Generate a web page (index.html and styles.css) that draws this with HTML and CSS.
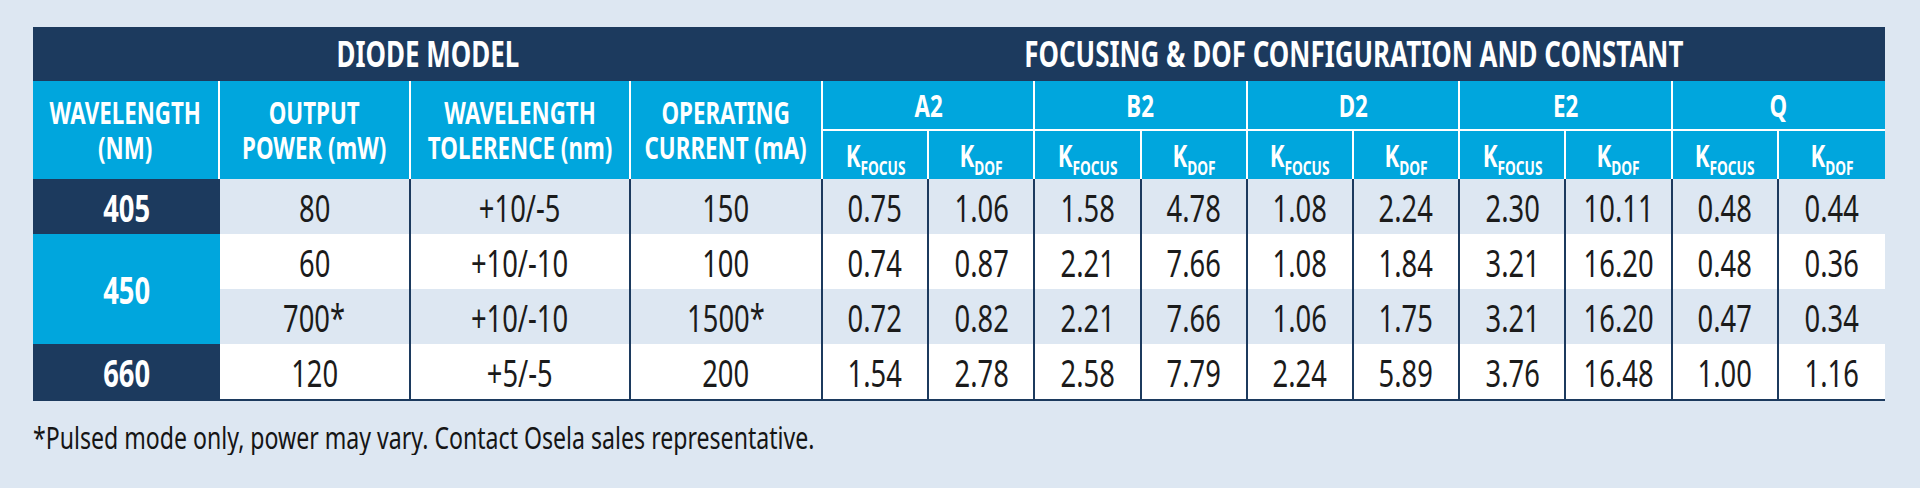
FILE: index.html
```html
<!DOCTYPE html>
<html lang="en">
<head>
<meta charset="utf-8">
<title>Diode model focusing and DOF constants</title>
<link rel="stylesheet" href="styles.css">
</head>
<body>
<div class="sheet">
  <table class="spec">
    <colgroup>
      <col class="c-wl"><col class="c-pw"><col class="c-tol"><col class="c-cur">
      <col><col><col><col><col><col><col><col><col><col>
    </colgroup>
    <thead>
      <tr class="band">
        <th colspan="4"><span class="t">DIODE MODEL</span></th>
        <th colspan="10"><span class="t">FOCUSING &amp; DOF CONFIGURATION AND CONSTANT</span></th>
      </tr>
      <tr class="grp">
        <th rowspan="2"><span class="t">WAVELENGTH<br>(NM)</span></th>
        <th rowspan="2"><span class="t">OUTPUT<br>POWER (mW)</span></th>
        <th rowspan="2"><span class="t">WAVELENGTH<br>TOLERENCE (nm)</span></th>
        <th rowspan="2"><span class="t">OPERATING<br>CURRENT (mA)</span></th>
        <th colspan="2" class="cfg"><span class="t">A2</span></th>
        <th colspan="2" class="cfg"><span class="t">B2</span></th>
        <th colspan="2" class="cfg"><span class="t">D2</span></th>
        <th colspan="2" class="cfg"><span class="t">E2</span></th>
        <th colspan="2" class="cfg"><span class="t">Q</span></th>
      </tr>
      <tr class="sub">
        <th><span class="t">K<sub>FOCUS</sub></span></th><th><span class="t">K<sub>DOF</sub></span></th>
        <th><span class="t">K<sub>FOCUS</sub></span></th><th><span class="t">K<sub>DOF</sub></span></th>
        <th><span class="t">K<sub>FOCUS</sub></span></th><th><span class="t">K<sub>DOF</sub></span></th>
        <th><span class="t">K<sub>FOCUS</sub></span></th><th><span class="t">K<sub>DOF</sub></span></th>
        <th><span class="t">K<sub>FOCUS</sub></span></th><th><span class="t">K<sub>DOF</sub></span></th>
      </tr>
    </thead>
    <tbody>
      <tr class="alt">
        <th class="wl dark"><span class="t">405</span></th>
        <td><span class="t">80</span></td><td><span class="t">+10/-5</span></td><td><span class="t">150</span></td>
        <td><span class="t">0.75</span></td><td><span class="t">1.06</span></td><td><span class="t">1.58</span></td><td><span class="t">4.78</span></td><td><span class="t">1.08</span></td><td><span class="t">2.24</span></td><td><span class="t">2.30</span></td><td><span class="t">10.11</span></td><td><span class="t">0.48</span></td><td><span class="t">0.44</span></td>
      </tr>
      <tr>
        <th class="wl blue" rowspan="2"><span class="t">450</span></th>
        <td><span class="t">60</span></td><td><span class="t">+10/-10</span></td><td><span class="t">100</span></td>
        <td><span class="t">0.74</span></td><td><span class="t">0.87</span></td><td><span class="t">2.21</span></td><td><span class="t">7.66</span></td><td><span class="t">1.08</span></td><td><span class="t">1.84</span></td><td><span class="t">3.21</span></td><td><span class="t">16.20</span></td><td><span class="t">0.48</span></td><td><span class="t">0.36</span></td>
      </tr>
      <tr class="alt">
        <td><span class="t">700*</span></td><td><span class="t">+10/-10</span></td><td><span class="t">1500*</span></td>
        <td><span class="t">0.72</span></td><td><span class="t">0.82</span></td><td><span class="t">2.21</span></td><td><span class="t">7.66</span></td><td><span class="t">1.06</span></td><td><span class="t">1.75</span></td><td><span class="t">3.21</span></td><td><span class="t">16.20</span></td><td><span class="t">0.47</span></td><td><span class="t">0.34</span></td>
      </tr>
      <tr class="last">
        <th class="wl dark"><span class="t">660</span></th>
        <td><span class="t">120</span></td><td><span class="t">+5/-5</span></td><td><span class="t">200</span></td>
        <td><span class="t">1.54</span></td><td><span class="t">2.78</span></td><td><span class="t">2.58</span></td><td><span class="t">7.79</span></td><td><span class="t">2.24</span></td><td><span class="t">5.89</span></td><td><span class="t">3.76</span></td><td><span class="t">16.48</span></td><td><span class="t">1.00</span></td><td><span class="t">1.16</span></td>
      </tr>
    </tbody>
  </table>
  <p class="note"><span class="nt">*Pulsed mode only, power may vary. Contact Osela sales representative.</span></p>
</div>
</body>
</html>
```

FILE: styles.css
```css
html, body {
  margin: 0;
  background: #dde7f2;
}

body {
  font-family: "Noto Sans", "Liberation Sans", sans-serif;
  color: #1b1b1b;
}

.sheet {
  padding: 27px 35px 0 33px;
}

.spec {
  width: 1852px;
  table-layout: fixed;
  border-collapse: separate;
  border-spacing: 0;
}

.c-wl { width: 187px; }
.c-pw { width: 191px; }
.c-tol { width: 220px; }
.c-cur { width: 192px; }

.spec th,
.spec td {
  padding: 0;
  text-align: center;
  vertical-align: middle;
  white-space: nowrap;
}

/* condensed lettering: text is narrowed horizontally, negative margins keep it centred */
.t {
  display: inline-block;
  transform: scaleX(0.72);
  margin: 0 -80px;
}

.band th {
  height: 54px;
  background: #1c3a5e;
  color: #fff;
  font-size: 36px;
  font-weight: 700;
  line-height: 1;
}

.grp th,
.sub th {
  background: #00a6dd;
  color: #fff;
  font-weight: 700;
  font-size: 31px;
  line-height: 35px;
  border-right: 2px solid #fff;
}

.grp th:last-child,
.sub th:last-child {
  border-right: 0;
}

.grp .cfg {
  height: 48px;
  border-bottom: 2px solid #fff;
}

.sub th {
  height: 48px;
}

.sub sub {
  font-size: 19px;
  line-height: 0;
  vertical-align: -8px;
}

.spec tbody td,
.spec tbody th {
  height: 55px;
  font-size: 38px;
  line-height: 1;
}

.spec tbody td {
  background: #fff;
  font-weight: 400;
  border-right: 2px solid #1c3a5e;
}

.spec tbody td:last-child {
  border-right: 0;
}

.spec tbody tr.alt td {
  background: #dde7f2;
}

.spec tbody tr.last td,
.spec tbody tr.last th {
  border-bottom: 2px solid #1c3a5e;
}

.wl {
  color: #fff;
  font-weight: 700;
}

.wl.dark { background: #1c3a5e; }
.wl.blue { background: #00a6dd; }

.note {
  margin: 20px 0 0;
  font-size: 30px;
  line-height: 34px;
  font-weight: 400;
  color: #151515;
  white-space: nowrap;
}

.nt {
  display: inline-block;
  transform: scaleX(0.77);
  transform-origin: 0 50%;
}
```
